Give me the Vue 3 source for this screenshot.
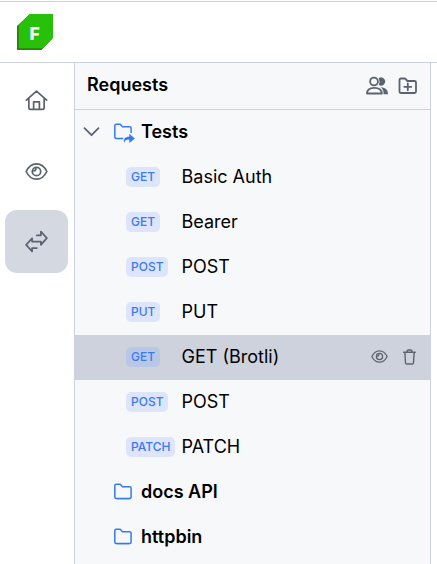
<script setup>
const requests = [
  { method: 'GET', name: 'Basic Auth' },
  { method: 'GET', name: 'Bearer' },
  { method: 'POST', name: 'POST' },
  { method: 'PUT', name: 'PUT' },
  { method: 'GET', name: 'GET (Brotli)', active: true },
  { method: 'POST', name: 'POST' },
  { method: 'PATCH', name: 'PATCH' },
]
const folders = ['docs API', 'httpbin']
</script>

<template>
  <div class="app">
    <header class="topbar">
      <div class="logo">
        <svg class="logo-shape" width="36" height="36" viewBox="0 0 36 36">
          <path d="M0 12L12 1H35V25L24.500 36H0Z" fill="#2f7d0c" />
          <path d="M1.800 11L12.500 0H36V24L25.300 34.200H1.800Z" fill="#28c10a" />
        </svg>
        <span class="logo-letter">F</span>
      </div>
    </header>
    <div class="main">
      <nav class="rail">
        <a class="rail-item">
          <svg width="24" height="24" viewBox="0 0 24 24" class="line">
            <path d="M1.400 11.700L12 2.200L22.600 11.700M4 9.800V19.400Q4 21.200 5.800 21.200H18.200Q20 21.200 20 19.400V9.800M9 21V13.400H15V21" />
          </svg>
        </a>
        <a class="rail-item">
          <svg width="24" height="24" viewBox="0 0 24 24" class="line">
            <path d="M1.200 12C3.600 7 7.400 4 12 4S20.400 7 22.800 12C20.400 17 16.600 20 12 20S3.600 17 1.200 12Z" />
            <circle cx="12" cy="12" r="4.400" />
            <path d="M9.200 11.300Q11.300 11.300 11.300 9" />
          </svg>
        </a>
        <a class="rail-item selected">
          <svg width="24" height="24" viewBox="0 0 24 24" class="line">
            <path d="M12.300 5.500H16.600V1.600L22.800 8.500L16.600 15.500V12.100H7.400V8.600L1.200 15.500L7.400 22.400V18.800H12.300" />
          </svg>
        </a>
      </nav>
      <section class="panel">
        <div class="panel-head">
          <h1>Requests</h1>
          <svg width="23" height="20" viewBox="0 0 23 20" class="line users">
            <path class="solid" d="M12.800 2.200A4 4 0 1 1 12.800 8.800Q14.200 5.500 12.800 2.200ZM14.500 11.300Q21.700 11.300 22.200 18.200H17.500Q18 13.600 14.500 11.300Z" />
            <circle cx="8" cy="5.500" r="3.900" />
            <path d="M1 17.500C1 13.600 4 11.800 8.300 11.800S15.800 13.600 15.800 17.500Z" />
          </svg>
          <svg width="19" height="18" viewBox="0 0 19 18" class="line add">
            <path d="M1.500 3Q1.500 1.500 3 1.500H7L9.500 4H16.500Q18 4 18 5.500V14.500Q18 16 16.500 16H3Q1.500 16 1.500 14.500ZM9.800 6.300V13.300M6.300 9.800H13.300" />
          </svg>
        </div>
        <div class="folder">
          <svg width="16" height="10" viewBox="0 0 16 10" class="line chevron">
            <path d="M1.500 1.200L8.500 8.200L15.500 1.200" />
          </svg>
          <svg width="22" height="22" viewBox="0 0 22 22" class="blue">
            <path d="M9.300 17.500H2.300Q.8 17.500 .8 16V4.800Q.8 3.300 2.300 3.300H6.200L8.500 5.700H15.600Q17.100 5.700 17.100 7.200V12" />
            <path class="solid" d="M10.300 22C9 18.100 11 15.600 15.300 15.700V12.800L20.800 17.600L15.300 22V18.600C12.500 18.500 10.600 19.500 10.300 22Z" />
          </svg>
          <span>Tests</span>
        </div>
        <div v-for="(item, i) in requests" :key="i" class="request" :class="{ active: item.active }">
          <span class="method"><b>{{ item.method }}</b></span>
          <span class="name">{{ item.name }}</span>
          <template v-if="item.active">
            <svg width="17" height="17" viewBox="0 0 24 24" class="line small">
              <path d="M1.200 12C3.600 7 7.400 4 12 4S20.400 7 22.800 12C20.400 17 16.600 20 12 20S3.600 17 1.200 12Z" />
              <circle cx="12" cy="12" r="4.400" />
              <path d="M9.200 11.300Q11.300 11.300 11.300 9" />
            </svg>
            <svg width="13" height="16" viewBox="0 0 13 16" class="line trash">
              <path d="M.7 3.300H12.300M4 3Q4 1 5.500 1H7.500Q9 1 9 3M1.900 3.500L2.500 13.800Q2.600 15 3.800 15H9.200Q10.400 15 10.500 13.800L11.100 3.500" />
            </svg>
          </template>
        </div>
        <div v-for="name in folders" :key="name" class="folder closed">
          <svg width="22" height="22" viewBox="0 0 22 22" class="blue">
            <path class="shade" d="M2.500 18.500H15.500" />
            <path d="M.8 4.800Q.8 3.300 2.300 3.300H6.200L8.500 5.700H15.600Q17.100 5.700 17.100 7.200V16Q17.100 17.500 15.600 17.500H2.300Q.8 17.500 .8 16Z" />
          </svg>
          <span>{{ name }}</span>
        </div>
      </section>
    </div>
  </div>
</template>

<style>
body {
  overflow: hidden;
  background: #fff;
}
</style>

<style scoped>
.app {
  height: 564px;
  box-sizing: border-box;
  padding-top: 1px;
  display: flex;
  flex-direction: column;
  font-family: Inter, sans-serif;
  color: #000;
}
.topbar {
  height: 62px;
  flex: none;
  box-sizing: border-box;
  border-top: 1px solid #cdd2e0;
  border-bottom: 1px solid #cdd2e0;
  padding: 12px 17px;
}
.logo {
  display: grid;
  width: 36px;
  height: 36px;
}
.logo-shape,
.logo-letter {
  grid-area: 1 / 1;
}
.logo-letter {
  place-self: center;
  color: #fff;
  font-weight: 800;
  font-size: 17.5px;
  line-height: 36px;
  padding: 2px 1px 0 0;
  height: 34px;
}
.main {
  flex: 1;
  min-height: 0;
  display: flex;
}
.rail {
  width: 74px;
  flex: none;
  box-sizing: border-box;
  padding: 6px 6px 0 5px;
  display: flex;
  flex-direction: column;
  gap: 8px;
}
.rail-item {
  width: 63px;
  height: 63px;
  box-sizing: border-box;
  border-radius: 12px;
  display: flex;
  align-items: center;
  justify-content: center;
}
.rail-item svg {
  width: 23px;
  height: 23px;
}
.selected {
  background: #d4d8e1;
  margin-top: -1px;
}
.panel {
  width: 357px;
  box-sizing: border-box;
  border-left: 1px solid #cdd2e0;
  border-right: 1px solid #cdd2e0;
  background: #f6f8fa;
}
.panel-head {
  height: 47px;
  box-sizing: border-box;
  border-bottom: 1px solid #cdd2e0;
  display: flex;
  align-items: center;
  padding: 0 12px;
}
h1 {
  margin: 0;
  padding-bottom: 2px;
  flex: 1;
  font-size: 18px;
  line-height: 22px;
  font-weight: 600;
}
.users {
  margin-right: 9px;
}
.add {
  margin-right: 1px;
}
.folder {
  height: 45px;
  box-sizing: border-box;
  display: flex;
  align-items: center;
  padding: 0 0 1px 8px;
  font-size: 18px;
  font-weight: 600;
}
.folder span {
  margin-left: 5px;
  padding-bottom: 2px;
}
.chevron {
  margin-right: 15px;
  overflow: visible;
}
.closed {
  padding-left: 39px;
}
.request {
  height: 45px;
  box-sizing: border-box;
  display: flex;
  align-items: center;
  padding: 0 14px 2px 51px;
  font-size: 18px;
}
.active {
  background: #ced2dd;
}
.method {
  width: 55.5px;
  flex: none;
  display: flex;
}
.method b {
  height: 20px;
  line-height: 20px;
  padding: 0 5px;
  border-radius: 5px;
  background: #dce5fb;
  color: #3d79f2;
  font-size: 12px;
  font-weight: 500;
}
.active .method b {
  background: #b9c7e6;
}
.name {
  flex: 1;
}
.small {
  margin-right: 15px;
}
svg {
  display: block;
  flex: none;
}
.line {
  fill: none;
  stroke: #5c6370;
  stroke-width: 1.8;
  stroke-linejoin: round;
  stroke-linecap: round;
}
.trash {
  stroke-width: 1.4;
}
.line .solid {
  fill: #5c6370;
  stroke: none;
}
.blue {
  fill: none;
  stroke: #3478f6;
  stroke-width: 1.5;
  stroke-linejoin: round;
}
.blue .solid {
  fill: #3478f6;
  stroke: none;
}
.blue .shade {
  stroke: #c8d9fb;
  stroke-width: 1;
}
</style>
